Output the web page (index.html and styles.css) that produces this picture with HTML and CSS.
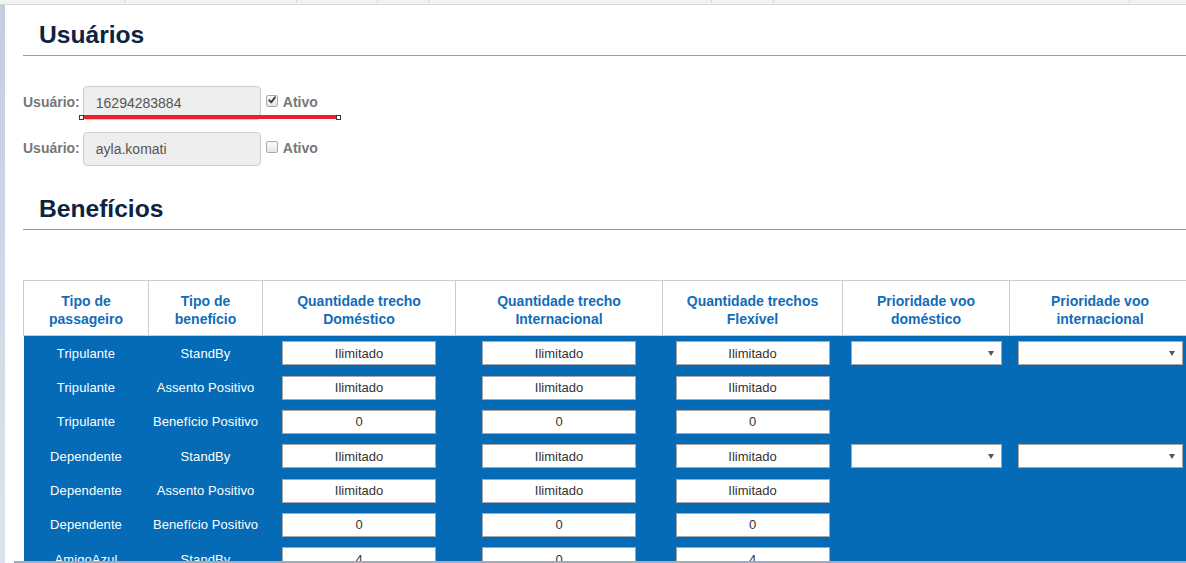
FILE: index.html
```html
<!DOCTYPE html>
<html lang="pt-BR">
<head>
<meta charset="utf-8">
<title>Usuários e Benefícios</title>
<link rel="stylesheet" href="styles.css">
</head>
<body>
<div class="app">
  <div class="topbar">
    <span class="tick"></span><span class="tick"></span><span class="tick"></span><span class="tick"></span><span class="tick"></span><span class="tick"></span><span class="tick"></span>
  </div>
  <div class="main">
    <div class="rail"></div>
    <div class="content">
      <div class="page">
        <h2 class="section-title">Usuários</h2>
        <div class="user-form">
          <div class="user-row annotated">
            <label class="field-label">Usuário:</label>
            <input class="field-input" type="text" value="16294283884" readonly>
            <span class="check"><svg width="12" height="12" viewBox="0 0 12 12"><path d="M2.6 6.2 L5 8.8 L9.6 2.8" fill="none" stroke="#3a3a3a" stroke-width="2.2" stroke-linecap="round" stroke-linejoin="round"/></svg></span>
            <span class="check-label">Ativo</span>
            <div class="annot"><span class="handle"></span><span class="handle"></span></div>
          </div>
          <div class="user-row">
            <label class="field-label">Usuário:</label>
            <input class="field-input" type="text" value="ayla.komati" readonly>
            <span class="check"></span>
            <span class="check-label">Ativo</span>
          </div>
        </div>
        <h2 class="section-title second">Benefícios</h2>
        <table class="benefits">
          <colgroup>
            <col class="c1"><col class="c2"><col class="c3"><col class="c4"><col class="c5"><col class="c6"><col class="c7">
          </colgroup>
          <thead>
            <tr>
              <th>Tipo de<br>passageiro</th>
              <th>Tipo de<br>benefício</th>
              <th>Quantidade trecho<br>Doméstico</th>
              <th>Quantidade trecho<br>Internacional</th>
              <th>Quantidade trechos<br>Flexível</th>
              <th>Prioridade voo<br>doméstico</th>
              <th>Prioridade voo<br>internacional</th>
            </tr>
          </thead>
          <tbody>
            <tr>
              <td class="txt">Tripulante</td><td class="txt">StandBy</td>
              <td><input class="qty" value="Ilimitado" readonly></td>
              <td><input class="qty" value="Ilimitado" readonly></td>
              <td><input class="qty" value="Ilimitado" readonly></td>
              <td class="sel-cell"><div class="select"><svg width="6" height="5" viewBox="0 0 6 5"><polygon points="0,0 6,0 3,5" fill="#555"/></svg></div></td>
              <td class="sel-cell"><div class="select"><svg width="6" height="5" viewBox="0 0 6 5"><polygon points="0,0 6,0 3,5" fill="#555"/></svg></div></td>
            </tr>
            <tr>
              <td class="txt">Tripulante</td><td class="txt">Assento Positivo</td>
              <td><input class="qty" value="Ilimitado" readonly></td>
              <td><input class="qty" value="Ilimitado" readonly></td>
              <td><input class="qty" value="Ilimitado" readonly></td>
              <td></td><td></td>
            </tr>
            <tr>
              <td class="txt">Tripulante</td><td class="txt">Benefício Positivo</td>
              <td><input class="qty" value="0" readonly></td>
              <td><input class="qty" value="0" readonly></td>
              <td><input class="qty" value="0" readonly></td>
              <td></td><td></td>
            </tr>
            <tr>
              <td class="txt">Dependente</td><td class="txt">StandBy</td>
              <td><input class="qty" value="Ilimitado" readonly></td>
              <td><input class="qty" value="Ilimitado" readonly></td>
              <td><input class="qty" value="Ilimitado" readonly></td>
              <td class="sel-cell"><div class="select"><svg width="6" height="5" viewBox="0 0 6 5"><polygon points="0,0 6,0 3,5" fill="#555"/></svg></div></td>
              <td class="sel-cell"><div class="select"><svg width="6" height="5" viewBox="0 0 6 5"><polygon points="0,0 6,0 3,5" fill="#555"/></svg></div></td>
            </tr>
            <tr>
              <td class="txt">Dependente</td><td class="txt">Assento Positivo</td>
              <td><input class="qty" value="Ilimitado" readonly></td>
              <td><input class="qty" value="Ilimitado" readonly></td>
              <td><input class="qty" value="Ilimitado" readonly></td>
              <td></td><td></td>
            </tr>
            <tr>
              <td class="txt">Dependente</td><td class="txt">Benefício Positivo</td>
              <td><input class="qty" value="0" readonly></td>
              <td><input class="qty" value="0" readonly></td>
              <td><input class="qty" value="0" readonly></td>
              <td></td><td></td>
            </tr>
            <tr>
              <td class="txt">AmigoAzul</td><td class="txt">StandBy</td>
              <td><input class="qty" value="4" readonly></td>
              <td><input class="qty" value="0" readonly></td>
              <td><input class="qty" value="4" readonly></td>
              <td></td><td></td>
            </tr>
          </tbody>
        </table>
      </div>
      <div class="hscroll"></div>
    </div>
  </div>
</div>
</body>
</html>
```
FILE: styles.css
```css
* { box-sizing: border-box; }
html, body {
  margin: 0;
  padding: 0;
  overflow: hidden;
  background: #ffffff;
}
body {
  font-family: "Liberation Sans", Arial, sans-serif;
}
.app {
  width: 1186px;
  height: 563px;
  display: flex;
  flex-direction: column;
}
.topbar {
  height: 5px;
  flex: none;
  background: #f2f3f5;
  border-bottom: 1px solid #d6d7d9;
  display: flex;
  align-items: flex-start;
}
.tick {
  width: 1px;
  height: 3px;
  background: #d4d6d9;
}
.tick:nth-child(1) { margin-left: 124px; }
.tick:nth-child(2) { margin-left: 171px; }
.tick:nth-child(3) { margin-left: 80px; }
.tick:nth-child(4) { margin-left: 50px; }
.tick:nth-child(5) { margin-left: 282px; }
.tick:nth-child(6) { margin-left: 61px; }
.tick:nth-child(7) { margin-left: 355px; }

.main {
  flex: 1;
  min-height: 0;
  display: flex;
}
.rail {
  width: 5px;
  flex: none;
  background: linear-gradient(#c3cde0, #dde3ee);
}
.content {
  flex: 1;
  min-width: 0;
  display: flex;
  flex-direction: column;
}
.page {
  flex: 1;
  min-height: 0;
  overflow: hidden;
  padding: 17px 0 0 18px;
}
.hscroll {
  height: 2px;
  flex: none;
  margin-left: 9px;
  background: #a3acb8;
}

.section-title {
  margin: 0;
  font-size: 24.6px;
  line-height: 26px;
  font-weight: bold;
  color: #0c2341;
  padding: 0 0 7px 16px;
  border-bottom: 1px solid #9c9c9c;
}
.section-title.second {
  margin-top: 30px;
}

.user-form {
  margin-top: 30px;
  display: flex;
  flex-direction: column;
  gap: 12px;
}
.user-row {
  display: flex;
  align-items: center;
  height: 34px;
}
.annotated {
  position: relative;
}
.field-label {
  font-size: 14px;
  font-weight: bold;
  color: #777777;
  margin-right: 3px;
  margin-bottom: 3px;
}
.field-input {
  width: 178px;
  height: 34px;
  border: 1px solid #cccccc;
  border-radius: 4px;
  background: #eeeeee;
  padding: 6px 12px;
  font-family: "Liberation Sans", Arial, sans-serif;
  font-size: 14px;
  color: #555555;
  outline: none;
}
.check {
  width: 12px;
  height: 12px;
  margin-left: 5px;
  margin-bottom: 5px;
  border: 1px solid #a9a9a9;
  border-radius: 2px;
  background: linear-gradient(#fcfcfc, #e4e4e4);
  display: flex;
  align-items: center;
  justify-content: center;
}
.check svg {
  display: block;
  margin-top: -1px;
}
.check-label {
  margin-left: 5px;
  margin-bottom: 3px;
  font-size: 14px;
  font-weight: bold;
  color: #777777;
}
.annot {
  position: absolute;
  left: 56px;
  top: 29px;
  width: 262px;
  height: 4px;
  background: #e8212b;
  display: flex;
  justify-content: space-between;
  align-items: center;
}
.handle {
  width: 5px;
  height: 5px;
  background: #ffffff;
  border: 1px solid #3a3a3a;
}

.benefits {
  margin-top: 50px;
  width: 1167px;
  table-layout: fixed;
  border-collapse: collapse;
  font-family: "Liberation Sans", Arial, sans-serif;
}
.c1 { width: 125px; }
.c2 { width: 114px; }
.c3 { width: 193px; }
.c4 { width: 207px; }
.c5 { width: 180px; }
.c6 { width: 167px; }
.c7 { width: 181px; }
.benefits th {
  border: 1px solid #cccccc;
  padding: 11px 8px 7px;
  font-size: 14px;
  line-height: 18px;
  font-weight: bold;
  color: #116cba;
  text-align: center;
  vertical-align: middle;
  background: #ffffff;
}
.benefits tbody td {
  background: #056bb6;
  color: #ffffff;
  font-size: 13px;
  text-align: center;
  vertical-align: middle;
  padding: 5.33px 8px 5px;
  white-space: nowrap;
}
.benefits tbody td.txt {
  padding-left: 0;
  padding-right: 0;
  letter-spacing: 0.1px;
}
.qty {
  display: block;
  margin: 0 auto;
  width: 154px;
  height: 24px;
  border: 1px solid #a6a6a6;
  background: #ffffff;
  text-align: center;
  font-family: "Liberation Sans", Arial, sans-serif;
  font-size: 13px;
  color: #333333;
  padding: 0 4px;
  outline: none;
}
.select {
  width: 100%;
  height: 24px;
  border: 1px solid #a6a6a6;
  background: #ffffff;
  display: flex;
  align-items: center;
  justify-content: flex-end;
  padding-right: 7px;
}
.select svg {
  display: block;
}
```
